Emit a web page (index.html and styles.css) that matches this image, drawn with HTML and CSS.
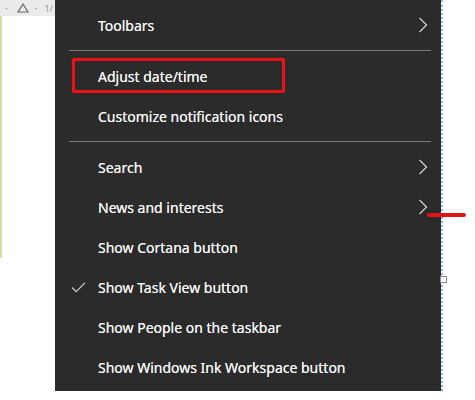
FILE: index.html
```html
<!DOCTYPE html>
<html>
<head>
<meta charset="utf-8">
<link rel="stylesheet" href="styles.css">
</head>
<body>
<div class="page">
  <div class="left">
    <div class="strip">
      <span class="dot">·</span>
      <svg class="tri" viewBox="0 0 12 10" width="12" height="10"><path d="M6 1 L11 9 L1 9 Z" fill="none" stroke="#666" stroke-width="1.2"/></svg>
      <span class="dot">·</span>
      <span class="ver">1/</span>
    </div>
    <div class="leftbody"><div class="edge"></div></div>
  </div>
  <div class="menu">
    <div class="item sub"><span class="label">Toolbars</span><svg class="chev" viewBox="0 0 10 16" width="10" height="16"><path d="M1.5 1 L8.5 8 L1.5 15" fill="none" stroke="#c8c8c8" stroke-width="1.4"/></svg></div>
    <div class="sep"></div>
    <div class="item hl"><span class="label">Adjust date/time</span><span class="box"></span></div>
    <div class="item"><span class="label">Customize notification icons</span></div>
    <div class="sep"></div>
    <div class="item sub"><span class="label">Search</span><svg class="chev" viewBox="0 0 10 16" width="10" height="16"><path d="M1.5 1 L8.5 8 L1.5 15" fill="none" stroke="#c8c8c8" stroke-width="1.4"/></svg></div>
    <div class="item sub"><span class="label">News and interests</span><svg class="chev" viewBox="0 0 10 16" width="10" height="16"><path d="M1.5 1 L8.5 8 L1.5 15" fill="none" stroke="#c8c8c8" stroke-width="1.4"/></svg><span class="arrow"></span></div>
    <div class="item"><span class="label">Show Cortana button</span></div>
    <div class="item"><svg class="check" viewBox="0 0 16 12" width="15" height="11"><path d="M1 6 L5.5 10.5 L15 1" fill="none" stroke="#d0d0d0" stroke-width="1.3"/></svg><span class="label">Show Task View button</span></div>
    <div class="item"><span class="label">Show People on the taskbar</span></div>
    <div class="item"><span class="label">Show Windows Ink Workspace button</span></div>
  </div>
  <div class="right"><span class="handle"></span></div>
</div>
</body>
</html>
```
FILE: styles.css
```css
html, body {
  margin: 0;
  padding: 0;
  background: #ffffff;
}
.page {
  display: flex;
  align-items: flex-start;
  width: 475px;
  height: 400px;
  font-family: "Noto Sans", "Open Sans", sans-serif;
}
.left {
  width: 55px;
  height: 400px;
  display: flex;
  flex-direction: column;
}
.strip {
  height: 16px;
  background: #ebebeb;
  display: flex;
  align-items: center;
  gap: 3px;
  padding-left: 5px;
  color: #888;
  font-size: 10px;
  overflow: hidden;
}
.tri {
  margin-left: 6px;
  margin-right: 3px;
}
.dot { color: #888; }
.ver { color: #999; font-size: 9px; margin-left: 4px; }
.leftbody {
  flex: 1;
}
.edge {
  width: 2px;
  height: 242px;
  background: #d6dcae;
}
.menu {
  width: 386px;
  background: #2b2b2b;
  padding: 5px 0 5px 0;
  box-sizing: border-box;
  height: 391px;
  position: relative;
}
.item {
  height: 40px;
  display: flex;
  align-items: center;
  position: relative;
  color: #f4f4f4;
  font-size: 14px;
  text-shadow: 0 0 0.4px #f4f4f4;
}
.label {
  margin-left: 43px;
}
.check {
  position: absolute;
  left: 16px;
  top: 15px;
}
.chev {
  position: absolute;
  right: 13px;
  top: 12px;
}
.sep {
  height: 11px;
  display: flex;
  align-items: center;
  padding: 0 10px 0 14px;
}
.sep::before {
  content: "";
  flex: 1;
  height: 1px;
  background: #7a7a7a;
}
.box {
  position: absolute;
  left: 17px;
  top: 2px;
  width: 213px;
  height: 35px;
  border: 3px solid #e8141a;
  box-sizing: border-box;
  border-radius: 2px;
  box-shadow: 0 0 1px #e8141a;
}
.arrow {
  position: absolute;
  left: 372px;
  top: 26px;
  width: 39px;
  height: 4px;
  background: #e2141a;
  border-radius: 2px;
  z-index: 2;
}
.right {
  width: 3px;
  height: 391px;
  border-left: 2px dotted #8fb3d6;
  position: relative;
}
.handle {
  position: absolute;
  left: -3px;
  top: 276px;
  width: 5px;
  height: 5px;
  border: 1px solid #888;
  background: #fff;
}
```
